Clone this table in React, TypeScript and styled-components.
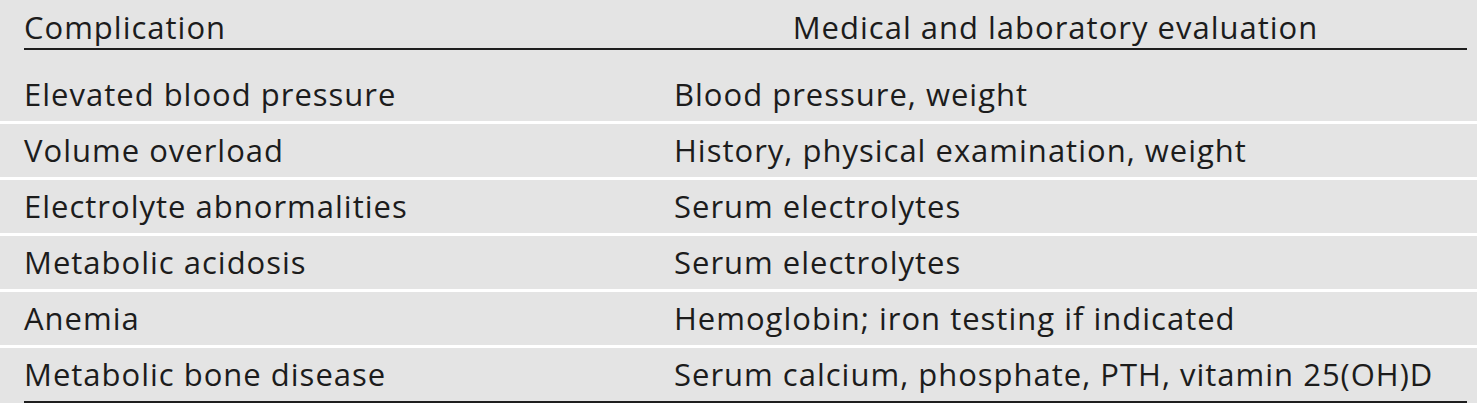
import React from 'react';
import styled, { createGlobalStyle } from 'styled-components';

const GlobalStyle = createGlobalStyle`
  html, body {
    margin: 0;
    padding: 0;
    background: #e4e4e4;
  }
`;

const Page = styled.div`
  width: 1477px;
  height: 403px;
  background: #e4e4e4;
  color: #1c1c1c;
  font-family: 'Open Sans', Lato, sans-serif;
  font-size: 31px;
  letter-spacing: 1px;
  font-variant-ligatures: none;
  overflow: hidden;
`;

const HeaderRow = styled.div`
  display: grid;
  grid-template-columns: 650px 763px;
  margin-left: 24px;
  width: 1443px;
  height: 50px;
  padding-top: 6px;
  box-sizing: border-box;
  border-bottom: 2px solid #1e1e1e;
  align-items: center;
`;

const HeadCell = styled.div<{ $center?: boolean }>`
  text-align: ${(p) => (p.$center ? 'center' : 'left')};
  line-height: 1;
  white-space: nowrap;
`;

const Row = styled.div<{ $first?: boolean }>`
  display: grid;
  grid-template-columns: 674px 763px;
  height: 53px;
  align-items: center;
  margin-top: ${(p) => (p.$first ? '18px' : '0')};
  border-top: ${(p) => (p.$first ? 'none' : '3px solid #ffffff')};
`;

const Cell = styled.div<{ $left?: boolean }>`
  padding-left: ${(p) => (p.$left ? '24px' : '0')};
  line-height: 1;
  white-space: nowrap;
`;

const BottomRule = styled.div`
  margin-left: 24px;
  width: 1443px;
  height: 2px;
  background: #1e1e1e;
`;

const rows = [
  ['Elevated blood pressure', 'Blood pressure, weight'],
  ['Volume overload', 'History, physical examination, weight'],
  ['Electrolyte abnormalities', 'Serum electrolytes'],
  ['Metabolic acidosis', 'Serum electrolytes'],
  ['Anemia', 'Hemoglobin; iron testing if indicated'],
  ['Metabolic bone disease', 'Serum calcium, phosphate, PTH, vitamin 25(OH)D'],
];

const App = () => {
  return (
    <Page>
      <GlobalStyle />
      <HeaderRow>
        <HeadCell>Complication</HeadCell>
        <HeadCell $center>Medical and laboratory evaluation</HeadCell>
      </HeaderRow>
      {rows.map(([complication, evaluation], i) => (
        <Row key={complication} $first={i === 0}>
          <Cell $left>{complication}</Cell>
          <Cell>{evaluation}</Cell>
        </Row>
      ))}
      <BottomRule />
    </Page>
  );
};

export default App;
